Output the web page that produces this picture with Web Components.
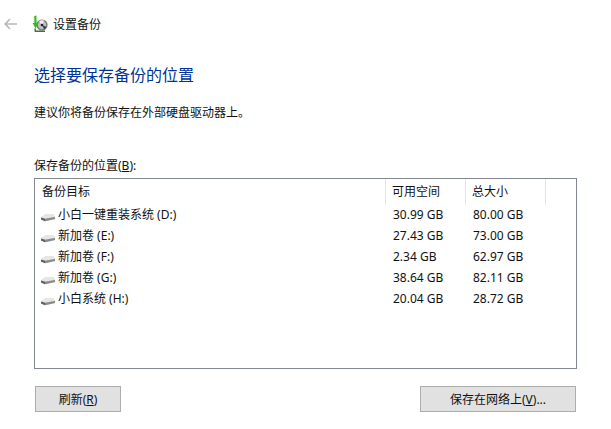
<!DOCTYPE html>
<html>
<head>
<meta charset="utf-8">
<style>
html, body { margin: 0; padding: 0; background: #fff; }
body { font-family: "Noto Sans", "Noto Sans CJK SC", sans-serif; font-size: 12px; color: #111; }
</style>
</head>
<body>
<backup-page></backup-page>

<script>
// title bar: back arrow, app icon, window title
var template_titlebar = document.createElement("template");
template_titlebar.innerHTML = `
<style>
:host { display: flex; align-items: center; height: 48px; padding-left: 4px; box-sizing: border-box; }
.back { width: 13px; height: 12px; }
.app { width: 16px; height: 18px; margin-left: 15px; }
.title { margin-left: 5px; font-size: 12px; color: #111; }
</style>
<svg class="back" viewBox="0 0 13 12"><path d="M6 1 1.2 6 6 11M1.5 6H13" fill="none" stroke="#b8b8b8" stroke-width="1.6"/></svg>
<svg class="app" viewBox="0 0 16 18">
  <circle cx="10" cy="10" r="5.6" fill="#777"/>
  <circle cx="10" cy="10" r="4.2" fill="#bfbfc8"/>
  <path d="M10 10 7 6.2A5 5 0 0 1 12 5.6Z" fill="#f0eef4"/>
  <path d="M10 10 14.6 12 12.2 14.6Z" fill="#3e3e4a"/>
  <circle cx="10" cy="10" r="1.3" fill="#222"/>
  <path d="M2.2 1 4.4 .6 4.6 8 6.6 8 3.6 13.4 .6 8 2.4 8Z" fill="#2fbf1c"/>
  <path d="M3 13.5 3.4 16.2H13" fill="none" stroke="#3f7330" stroke-width="1.5"/>
</svg>
<span class="title"><slot></slot></span>
`;
class TitleBar extends HTMLElement {
    constructor(){
        super();
        this.attachShadow({mode:"open"});
    }
    connectedCallback(){
        this.shadowRoot.appendChild(template_titlebar.content.cloneNode(true));
    }
}
customElements.define("title-bar", TitleBar);

// one row of the drive list
var template_driverow = document.createElement("template");
template_driverow.innerHTML = `
<style>
:host { display: grid; grid-template-columns: 350px 80px 80px; height: 21px; align-items: center; font-size: 12px; color: #111; }
.name { display: flex; align-items: center; padding-left: 4px; }
.name svg { width: 16px; height: 9px; margin-top: 5px; margin-right: 2px; flex: none; }
.label { margin-top: -1px; }
.num { padding-left: 7px; margin-top: -1px; }
</style>
<div class="name">
  <svg viewBox="0 0 16 9">
    <path d="M1 4.6 6 1H13L15 4V6L5 8.2 1 6.6Z" fill="#c4c4c4"/>
    <path d="M1 4.6 5 5.8 15 4 13 1H6Z" fill="#e6e6e6"/>
    <path d="M1 4.6 5 5.8V8.2L1 6.6Z" fill="#5f5f5f"/>
    <path d="M5 5.8 15 4V6L5 8.2Z" fill="#8a8a8a"/>
  </svg>
  <span class="label"></span>
</div>
<div class="num free"></div>
<div class="num total"></div>
`;
class DriveRow extends HTMLElement {
    constructor(){
        super();
        this.attachShadow({mode:"open"});
    }
    connectedCallback(){
        this.shadowRoot.appendChild(template_driverow.content.cloneNode(true));
        this.shadowRoot.querySelector(".label").innerText = this.getAttribute("name");
        this.shadowRoot.querySelector(".free").innerText = this.getAttribute("free");
        this.shadowRoot.querySelector(".total").innerText = this.getAttribute("total");
    }
}
customElements.define("drive-row", DriveRow);

// list box with column header
var template_drivelist = document.createElement("template");
template_drivelist.innerHTML = `
<style>
:host { display: block; width: 543px; height: 191px; box-sizing: border-box; border: 1px solid #828790; margin-left: 34px; padding-left: 1px; background: #fff; }
.head { display: grid; grid-template-columns: 350px 80px 80px; height: 24px; font-size: 12px; color: #111; }
.head div { border-right: 1px solid #e5e5e5; padding-left: 6px; line-height: 26px; box-sizing: border-box; }
.rows { margin-top: 1px; }
</style>
<div class="head"><div>备份目标</div><div>可用空间</div><div>总大小</div></div>
<div class="rows"><slot></slot></div>
`;
class DriveList extends HTMLElement {
    constructor(){
        super();
        this.attachShadow({mode:"open"});
    }
    connectedCallback(){
        this.shadowRoot.appendChild(template_drivelist.content.cloneNode(true));
    }
}
customElements.define("drive-list", DriveList);

var template_winbutton = document.createElement("template");
template_winbutton.innerHTML = `
<style>
:host { display: flex; align-items: center; justify-content: center; height: 26px; box-sizing: border-box; border: 1px solid #adadad; background: #e1e1e1; font-size: 12px; color: #111; }
::slotted(u) { text-decoration: underline; }
</style>
<slot></slot>
`;
class WinButton extends HTMLElement {
    constructor(){
        super();
        this.attachShadow({mode:"open"});
    }
    connectedCallback(){
        this.shadowRoot.appendChild(template_winbutton.content.cloneNode(true));
    }
}
customElements.define("win-button", WinButton);

// whole page
var template_page = document.createElement("template");
template_page.innerHTML = `
<style>
:host { display: block; width: 611px; height: 429px; overflow: hidden; }
h1 { margin: 16px 0 0 34px; font-size: 16px; line-height: 22px; font-weight: 400; color: #003399; }
.desc { margin: 17px 0 0 34px; line-height: 20px; }
.lbl { margin: 33px 0 0 34px; line-height: 20px; height: 22px; }
.btns { display: flex; justify-content: space-between; margin: 17px 0 0 35px; width: 541px; }
.refresh { width: 86px; }
.net { width: 156px; }
</style>
<title-bar>设置备份</title-bar>
<h1>选择要保存备份的位置</h1>
<div class="desc">建议你将备份保存在外部硬盘驱动器上。</div>
<div class="lbl">保存备份的位置(<u>B</u>):</div>
<drive-list>
  <drive-row name="小白一键重装系统 (D:)" free="30.99 GB" total="80.00 GB"></drive-row>
  <drive-row name="新加卷 (E:)" free="27.43 GB" total="73.00 GB"></drive-row>
  <drive-row name="新加卷 (F:)" free="2.34 GB" total="62.97 GB"></drive-row>
  <drive-row name="新加卷 (G:)" free="38.64 GB" total="82.11 GB"></drive-row>
  <drive-row name="小白系统 (H:)" free="20.04 GB" total="28.72 GB"></drive-row>
</drive-list>
<div class="btns">
  <win-button class="refresh">刷新(<u>R</u>)</win-button>
  <win-button class="net">保存在网络上(<u>V</u>)...</win-button>
</div>
`;
class BackupPage extends HTMLElement {
    constructor(){
        super();
        this.attachShadow({mode:"open"});
    }
    connectedCallback(){
        this.shadowRoot.appendChild(template_page.content.cloneNode(true));
    }
}
customElements.define("backup-page", BackupPage);
</script>
</body>
</html>
